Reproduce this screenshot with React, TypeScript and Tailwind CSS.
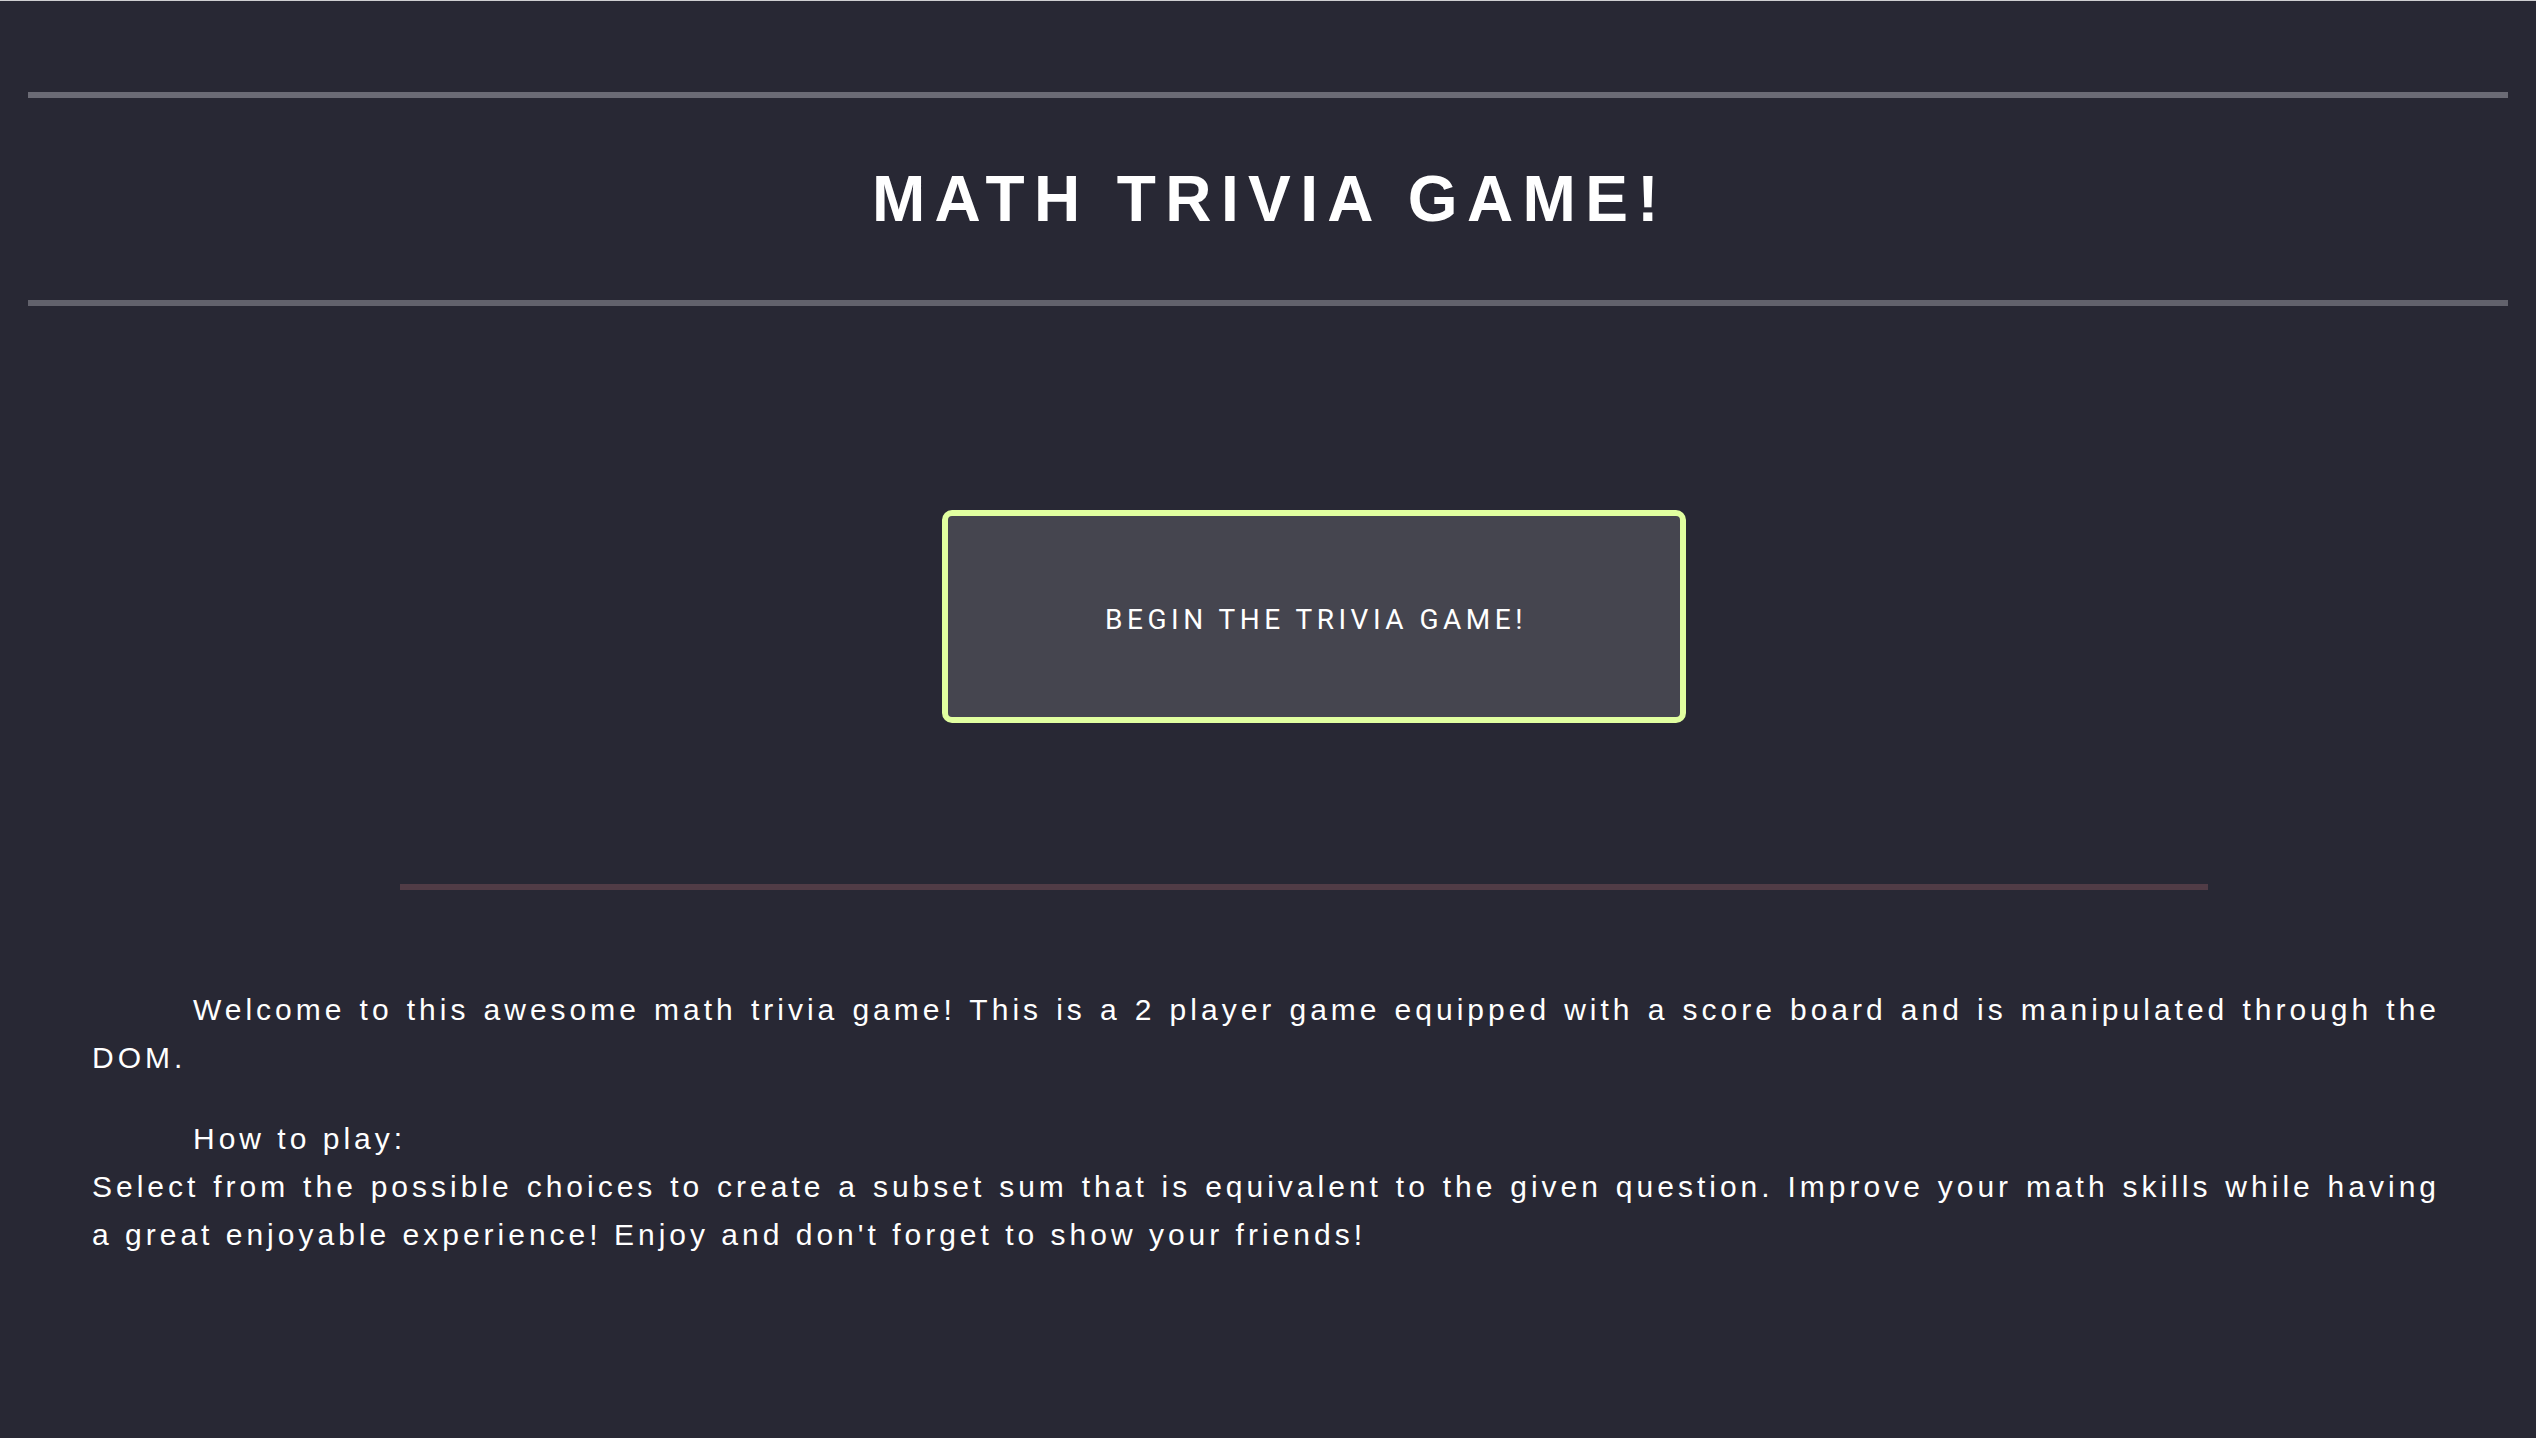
import React from "react";

export default function App() {
  const body = { fontFamily: '"Liberation Sans", Arial, Helvetica, sans-serif' };
  return (
    <div
      className="min-h-[1438px] w-full border-t border-[#cfcfd2] bg-[#282834] text-white"
      style={body}
    >
      <div className="mx-[28px] mt-[91px] h-[6px] bg-[#6b6b75]" />
      <div className="flex h-[202px] items-center justify-center">
        <h1 className="pl-[4px] text-[64px] font-bold leading-none tracking-[9.4px] text-white">
          MATH TRIVIA GAME!
        </h1>
      </div>
      <div className="mx-[28px] h-[6px] bg-[#62626c]" />

      <div className="ml-[942px] mt-[204px] flex h-[213px] w-[744px] items-center justify-center rounded-[10px] border-[6px] border-[#e1ffa0] bg-[#45454f]">
        <span
          className="mt-[6px] pl-[4px] text-[28px] leading-none tracking-[4.5px] text-white"
          style={{ fontFamily: 'Roboto, "Liberation Sans", sans-serif' }}
        >
          BEGIN THE TRIVIA GAME!
        </span>
      </div>

      <div className="ml-[400px] mt-[161px] h-[6px] w-[1808px] bg-[#513c46]" />

      <div className="mt-[96px] pl-[92px] pr-[96px] text-[30px] leading-[48px] tracking-[4px] text-white">
        <div>
          <div className="indent-[101px] text-justify [text-align-last:justify]">
            Welcome to this awesome math trivia game! This is a 2 player game equipped with a score board and is manipulated through the
          </div>
          <div>DOM.</div>
        </div>
        <div className="mt-[33px]">
          <div className="indent-[101px]">How to play:</div>
          <div className="text-justify [text-align-last:justify]">
            Select from the possible choices to create a subset sum that is equivalent to the given question. Improve your math skills while having
          </div>
          <div>a great enjoyable experience! Enjoy and don't forget to show your friends!</div>
        </div>
      </div>
    </div>
  );
}
